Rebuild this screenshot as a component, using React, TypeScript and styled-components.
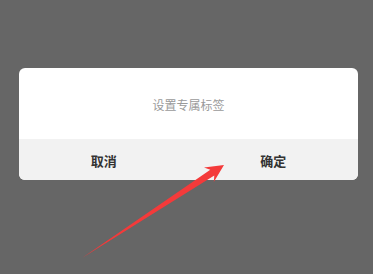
import React from "react";
import styled, { createGlobalStyle } from "styled-components";

const Global = createGlobalStyle`
  html, body { margin: 0; padding: 0; background: #666666; }
  body { font-family: "Noto Sans CJK SC", "Noto Sans", sans-serif; }
`;

const Page = styled.div`
  position: relative;
  width: 373px;
  height: 274px;
  background: #666666;
  padding: 68px 0 0 19px;
  box-sizing: border-box;
  overflow: hidden;
`;

const Dialog = styled.div`
  width: 339px;
  border-radius: 6px;
  overflow: hidden;
  background: #ffffff;
  display: flex;
  flex-direction: column;
`;

const Body = styled.div`
  height: 71px;
  display: flex;
  align-items: center;
  justify-content: center;
  padding-top: 3px;
  box-sizing: border-box;
`;

const Title = styled.div`
  font-size: 12px;
  color: #9a9a9a;
  line-height: 1;
`;

const Footer = styled.div`
  height: 41px;
  background: #f2f2f2;
  display: grid;
  grid-template-columns: 1fr 1fr;
`;

const Action = styled.div`
  display: flex;
  align-items: center;
  justify-content: center;
  font-size: 13px;
  font-weight: 700;
  color: #333333;
  padding-top: 1px;
`;

const Arrow = styled.svg`
  position: absolute;
  left: 0;
  top: 0;
`;

export default function App() {
  return (
    <>
      <Global />
      <Page>
        <Dialog>
          <Body>
            <Title>设置专属标签</Title>
          </Body>
          <Footer>
            <Action>取消</Action>
            <Action>确定</Action>
          </Footer>
        </Dialog>
        <Arrow width="373" height="274" viewBox="0 0 373 274">
          <polygon
            points="82,258 210.3,169.8 204,167.6 224,165 213.8,182 214.3,175.5"
            fill="#f43a3a"
          />
        </Arrow>
      </Page>
    </>
  );
}
